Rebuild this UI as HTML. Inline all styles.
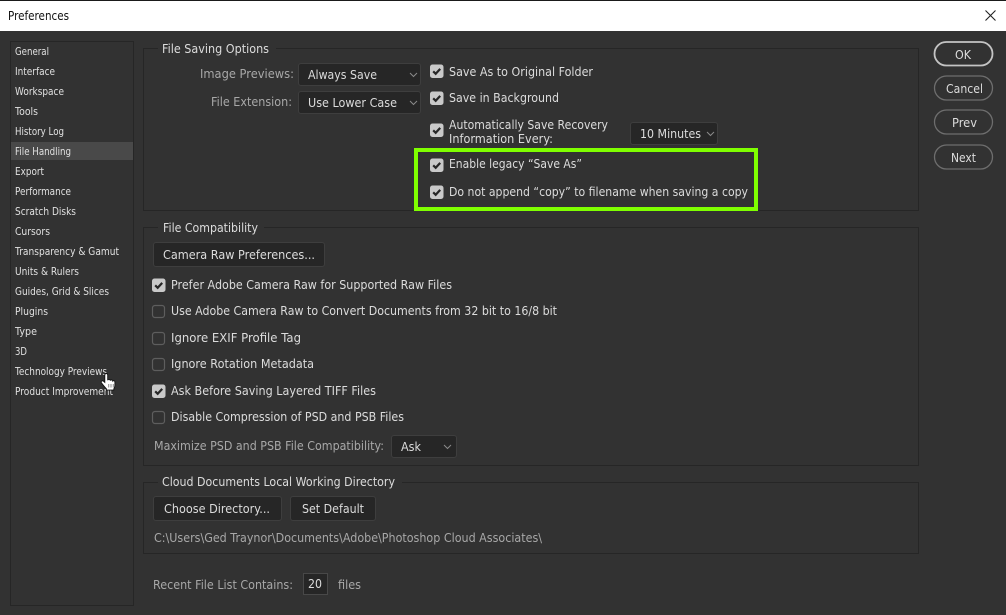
<!DOCTYPE html>
<html><head><meta charset="utf-8"><title>Preferences</title>
<style>
html,body{margin:0;padding:0;background:#323232;width:1006px;height:615px;overflow:hidden}
svg{display:block}
text{font-family:"DejaVu Sans","Liberation Sans",sans-serif;font-size:12px;fill:#dcdcdc}
.s{font-size:10.5px;fill:#e0e0e0}
.m{fill:#a8a8a8}
.g{fill:none;stroke:#262626}
.b{fill:#262626;stroke:#3e3e3e}
.cb{fill:#c9c9c9}
.ck{fill:none;stroke:#262626;stroke-width:2.2}
.un{fill:none;stroke:#5e5e5e;stroke-width:1.2}
.ar{fill:none;stroke:#8a8a8a;stroke-width:1}
.rb{fill:#323232;stroke:#6e6e6e;stroke-width:1.3}
</style></head><body>
<svg width="1006" height="615" viewBox="0 0 1006 615" xmlns="http://www.w3.org/2000/svg">
<defs>
<g id="c"><rect class="cb" x="0" y="-.5" width="13.500" height="13.500" rx="2.500"/><path class="ck" d="M3.200 6.300L5.700 8.800L10.200 3.900"/></g>
<g id="u"><rect class="un" x=".5" y=".5" width="12" height="12" rx="2.500"/></g>
</defs>
<rect width="1006" height="615" fill="#323232"/>
<rect x="0" y="0" width="1006" height="31" fill="#fff"/>
<rect x="0" y="0" width="1006" height="1" fill="#1a1a1a"/>
<text x="8" y="20" textLength="61" lengthAdjust="spacingAndGlyphs" style="fill:#111">Preferences</text>
<path d="M985.500 10.500L995.500 20.500M995.500 10.500L985.500 20.500" stroke="#222" stroke-width="1.100" fill="none"/>

<!-- sidebar -->
<rect class="g" x="10.500" y="41.500" width="123" height="564"/>
<rect x="11" y="142" width="122" height="18" fill="#494949"/>
<text class="s" x="15" y="55" textLength="34" lengthAdjust="spacingAndGlyphs">General</text>
<text class="s" x="15" y="75" textLength="40" lengthAdjust="spacingAndGlyphs">Interface</text>
<text class="s" x="15" y="95" textLength="49" lengthAdjust="spacingAndGlyphs">Workspace</text>
<text class="s" x="15" y="115" textLength="23" lengthAdjust="spacingAndGlyphs">Tools</text>
<text class="s" x="15" y="135" textLength="49" lengthAdjust="spacingAndGlyphs">History Log</text>
<text class="s" x="15" y="155" textLength="56" lengthAdjust="spacingAndGlyphs">File Handling</text>
<text class="s" x="15" y="175" textLength="29" lengthAdjust="spacingAndGlyphs">Export</text>
<text class="s" x="15" y="195" textLength="56" lengthAdjust="spacingAndGlyphs">Performance</text>
<text class="s" x="15" y="215" textLength="61" lengthAdjust="spacingAndGlyphs">Scratch Disks</text>
<text class="s" x="15" y="235" textLength="35" lengthAdjust="spacingAndGlyphs">Cursors</text>
<text class="s" x="15" y="255" textLength="104" lengthAdjust="spacingAndGlyphs">Transparency &amp; Gamut</text>
<text class="s" x="15" y="275" textLength="64" lengthAdjust="spacingAndGlyphs">Units &amp; Rulers</text>
<text class="s" x="15" y="295" textLength="94" lengthAdjust="spacingAndGlyphs">Guides, Grid &amp; Slices</text>
<text class="s" x="15" y="315" textLength="33" lengthAdjust="spacingAndGlyphs">Plugins</text>
<text class="s" x="15" y="335" textLength="22" lengthAdjust="spacingAndGlyphs">Type</text>
<text class="s" x="15" y="355" textLength="12" lengthAdjust="spacingAndGlyphs">3D</text>
<text class="s" x="15" y="375" textLength="92" lengthAdjust="spacingAndGlyphs">Technology Previews</text>
<text class="s" x="15" y="395" textLength="98" lengthAdjust="spacingAndGlyphs">Product Improvement</text>
<!-- hand cursor -->
<path d="M104.800 375c0-2 2.900-2 2.900 0v5.300c.4-1.300 2.500-1.200 2.600.3.500-1.100 2.400-.9 2.500.5.600-.7 2.100-.4 2.100 1v3.100c0 1.500-.5 2.700-1.100 3.800v1.100h-7.400v-1.300c-1.600-1.600-3.500-4-5-6-.9-1.400.9-2.700 2.200-1.500l1.200 1.100z" fill="#fff" stroke="#111" stroke-width=".9"/>
<path d="M108.800 384v3.500M111 384v3.500M113.200 384v3.500" stroke="#555" stroke-width=".7" fill="none"/>

<!-- groups -->
<path class="g" d="M158 48.500H143.500V210.500H918.500V48.500H276"/>
<text x="162" y="53" textLength="107" lengthAdjust="spacingAndGlyphs">File Saving Options</text>
<path class="g" d="M158 227.500H143.500V465.500H918.500V227.500H264"/>
<text x="163" y="232" textLength="95" lengthAdjust="spacingAndGlyphs">File Compatibility</text>
<path class="g" d="M158 482.500H143.500V553.500H918.500V482.500H402"/>
<text x="162" y="486" textLength="233" lengthAdjust="spacingAndGlyphs">Cloud Documents Local Working Directory</text>

<!-- saving options -->
<text class="m" x="200" y="78" textLength="94" lengthAdjust="spacingAndGlyphs">Image Previews:</text>
<text class="m" x="211" y="106" textLength="81" lengthAdjust="spacingAndGlyphs">File Extension:</text>
<rect class="b" x="298.500" y="63.500" width="122" height="22" rx="2.500"/>
<text x="308" y="79" textLength="69" lengthAdjust="spacingAndGlyphs">Always Save</text>
<path class="ar" d="M410 73l3.500 3.500l3.500-3.500"/>
<rect class="b" x="298.500" y="91.500" width="122" height="22" rx="2.500"/>
<text x="308" y="107" textLength="89" lengthAdjust="spacingAndGlyphs">Use Lower Case</text>
<path class="ar" d="M410 101l3.500 3.500l3.500-3.500"/>

<use href="#c" x="430" y="65"/><text x="449" y="76" textLength="144" lengthAdjust="spacingAndGlyphs">Save As to Original Folder</text>
<use href="#c" x="430" y="92"/><text x="449" y="102" textLength="110" lengthAdjust="spacingAndGlyphs">Save in Background</text>
<use href="#c" x="430" y="124"/>
<text x="449" y="129" textLength="159" lengthAdjust="spacingAndGlyphs">Automatically Save Recovery</text>
<text x="449" y="143" textLength="104" lengthAdjust="spacingAndGlyphs">Information Every:</text>
<rect class="b" x="630.500" y="122.500" width="87" height="22" rx="2.500"/>
<text x="640" y="138" textLength="61" lengthAdjust="spacingAndGlyphs">10 Minutes</text>
<path class="ar" d="M707 132l3.500 3.500l3.500-3.500"/>
<use href="#c" x="430" y="159"/><text x="449" y="168" textLength="133" lengthAdjust="spacingAndGlyphs">Enable legacy “Save As”</text>
<use href="#c" x="430" y="186"/><text x="449" y="196" textLength="299" lengthAdjust="spacingAndGlyphs">Do not append “copy” to filename when saving a copy</text>
<rect x="416" y="150" width="340" height="59" fill="none" stroke="#7fff00" stroke-width="4"/>

<!-- compatibility -->
<rect class="b" x="153.500" y="242.500" width="171" height="24" rx="2.500"/>
<text x="163" y="259" textLength="152" lengthAdjust="spacingAndGlyphs">Camera Raw Preferences...</text>
<use href="#c" x="152" y="279"/><text x="171" y="289" textLength="281" lengthAdjust="spacingAndGlyphs">Prefer Adobe Camera Raw for Supported Raw Files</text>
<use href="#u" x="152" y="305"/><text x="171" y="315" textLength="386" lengthAdjust="spacingAndGlyphs">Use Adobe Camera Raw to Convert Documents from 32 bit to 16/8 bit</text>
<use href="#u" x="152" y="332"/><text x="171" y="342" textLength="130" lengthAdjust="spacingAndGlyphs">Ignore EXIF Profile Tag</text>
<use href="#u" x="152" y="358"/><text x="171" y="368" textLength="143" lengthAdjust="spacingAndGlyphs">Ignore Rotation Metadata</text>
<use href="#c" x="152" y="385"/><text x="171" y="395" textLength="205" lengthAdjust="spacingAndGlyphs">Ask Before Saving Layered TIFF Files</text>
<use href="#u" x="152" y="411"/><text x="171" y="421" textLength="233" lengthAdjust="spacingAndGlyphs">Disable Compression of PSD and PSB Files</text>
<text class="m" x="154" y="450" textLength="230" lengthAdjust="spacingAndGlyphs">Maximize PSD and PSB File Compatibility:</text>
<rect class="b" x="391.500" y="435.500" width="65" height="22" rx="2.500"/>
<text x="401" y="451" textLength="20" lengthAdjust="spacingAndGlyphs">Ask</text>
<path class="ar" d="M444 445l3.500 3.500l3.500-3.500"/>

<!-- cloud -->
<rect class="b" x="153.500" y="496.500" width="128" height="24" rx="2.500"/>
<text x="164" y="513" textLength="106" lengthAdjust="spacingAndGlyphs">Choose Directory...</text>
<rect class="b" x="290.500" y="496.500" width="85" height="24" rx="2.500"/>
<text x="302" y="513" textLength="62" lengthAdjust="spacingAndGlyphs">Set Default</text>
<text class="m" x="154" y="542" textLength="388" lengthAdjust="spacingAndGlyphs">C:\Users\Ged Traynor\Documents\Adobe\Photoshop Cloud Associates\</text>

<!-- recent -->
<text class="m" x="153" y="589" textLength="140" lengthAdjust="spacingAndGlyphs">Recent File List Contains:</text>
<rect x="303.500" y="573.500" width="24" height="21" fill="#262626" stroke="#484848"/>
<text x="308" y="588" textLength="14" lengthAdjust="spacingAndGlyphs">20</text>
<text class="m" x="338" y="589" textLength="23" lengthAdjust="spacingAndGlyphs">files</text>

<!-- right buttons -->
<rect x="934.500" y="42" width="58" height="23.500" rx="11.700" fill="#323232" stroke="#c4c4c4" stroke-width="1.800"/>
<text x="955" y="59" textLength="16" lengthAdjust="spacingAndGlyphs">OK</text>
<rect class="rb" x="934.500" y="76" width="58" height="24" rx="12"/>
<text x="946" y="93" textLength="37" lengthAdjust="spacingAndGlyphs">Cancel</text>
<rect class="rb" x="934.500" y="110" width="58" height="24" rx="12"/>
<text x="952" y="127" textLength="25" lengthAdjust="spacingAndGlyphs">Prev</text>
<rect class="rb" x="934.500" y="145" width="58" height="24" rx="12"/>
<text x="951" y="162" textLength="25" lengthAdjust="spacingAndGlyphs">Next</text>
</svg>
</body></html>
